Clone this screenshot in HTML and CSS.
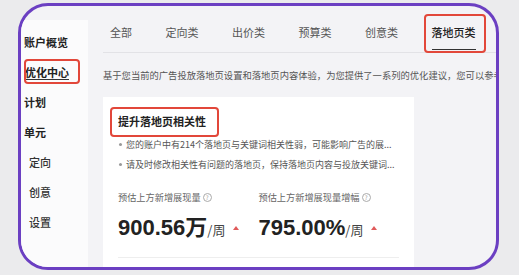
FILE: index.html
```html
<!DOCTYPE html>
<html lang="zh-CN">
<head>
    <meta charset="UTF-8">
    <meta name="viewport" content="width=device-width, initial-scale=1.0">
    <title>优化中心</title>
    <link rel="stylesheet" href="styles.css">
</head>
<body>
    <div class="frame">
        <div class="sidebar">
            <div class="nav-item">账户概览</div>
            <div class="nav-item current marked"><span>优化中心</span></div>
            <div class="nav-item">计划</div>
            <div class="nav-item">单元</div>
            <div class="nav-item sub">定向</div>
            <div class="nav-item sub">创意</div>
            <div class="nav-item sub">设置</div>
        </div>
        <div class="main">
            <div class="tabs">
                <div class="tab">全部</div>
                <div class="tab">定向类</div>
                <div class="tab">出价类</div>
                <div class="tab">预算类</div>
                <div class="tab">创意类</div>
                <div class="tab active marked">落地页类</div>
            </div>
            <p class="desc">基于您当前的广告投放落地页设置和落地页内容体验，为您提供了一系列的优化建议，您可以参考</p>
            <div class="card">
                <h2 class="card-title marked">提升落地页相关性</h2>
                <ul class="points">
                    <li>您的账户中有214个落地页与关键词相关性弱，可能影响广告的展...</li>
                    <li>请及时修改相关性有问题的落地页，保持落地页内容与投放关键词...</li>
                </ul>
                <div class="metrics">
                    <div class="metric">
                        <div class="label">预估上方新增展现量 <span class="info">?</span></div>
                        <div class="value"><b>900.56万</b><small>/周</small><i class="up"></i></div>
                    </div>
                    <div class="metric">
                        <div class="label">预估上方新增展现量增幅 <span class="info">?</span></div>
                        <div class="value"><b>795.00%</b><small>/周</small><i class="up"></i></div>
                    </div>
                </div>
                <div class="divider"></div>
            </div>
        </div>
    </div>
</body>
</html>
```

FILE: styles.css
```css
body {
    margin: 0;
    padding: 3px 0 0 18px;
    background: #ebebed;
    font-family: "Noto Sans CJK SC", "Noto Sans", sans-serif;
    color: #222;
}

.frame {
    box-sizing: border-box;
    width: 481px;
    height: 267px;
    border: 3px solid #6b3fc2;
    border-radius: 30px;
    background: #f3f3f6;
    display: flex;
    overflow: hidden;
}

.sidebar {
    width: 67px;
    flex-shrink: 0;
    margin-top: 14px;
    padding-top: 7px;
    background: #fbfbfc;
}

.nav-item {
    position: relative;
    height: 30px;
    line-height: 30px;
    padding-left: 3px;
    font-size: 11px;
    font-weight: 700;
    color: #222;
}

.nav-item.current span {
    padding-left: 1px;
    border-bottom: 1px solid #333;
    line-height: 14px;
    display: inline-block;
}

.nav-item.sub {
    padding-left: 8px;
    font-weight: 500;
    color: #333;
}

.marked::after {
    content: "";
    position: absolute;
    border: 2px solid #e2473a;
    border-radius: 4px;
}

.nav-item.marked::after {
    left: 3px;
    top: 2px;
    width: 52px;
    height: 21px;
}

.main {
    flex: 1;
    padding-left: 15px;
    overflow: hidden;
}

.tabs {
    display: flex;
    gap: 33.5px;
    height: 46px;
    padding-left: 7px;
    border-bottom: 1px solid #e2e2e6;
}

.tab {
    position: relative;
    padding-top: 19px;
    line-height: 14px;
    font-size: 11px;
    color: #555;
}

.tab.active {
    color: #222;
    font-weight: 500;
    box-shadow: inset 0 -3px 0 -1px #f3f3f6, inset 0 -3px 0 #333;
}

.tab.marked::after {
    left: -8px;
    top: 8px;
    width: 58px;
    height: 35px;
}

.desc {
    margin: 15px 0 0;
    line-height: 14px;
    font-size: 9.3px;
    color: #555;
    white-space: nowrap;
}

.card {
    width: 311px;
    height: 200px;
    margin-top: 15px;
    padding: 16px 15px 0;
    box-sizing: border-box;
    background: #fff;
}

.card-title {
    position: relative;
    margin: 0;
    line-height: 16px;
    font-size: 11px;
    font-weight: 700;
    color: #222;
}

.card-title.marked::after {
    left: -8px;
    top: -6px;
    width: 105px;
    height: 26px;
}

.points {
    list-style: none;
    margin: 6px 0 0;
    padding: 0;
}

.points li {
    line-height: 20px;
    font-size: 9px;
    color: #555;
    white-space: nowrap;
}

.points li::before {
    content: "";
    display: inline-block;
    width: 3px;
    height: 3px;
    margin: 0 4px 2px 1px;
    border-radius: 50%;
    background: #999;
}

.metrics {
    display: flex;
    margin-top: 15px;
}

.metric {
    width: 141px;
}

.label {
    display: flex;
    align-items: center;
    gap: 2px;
    line-height: 14px;
    font-size: 9.2px;
    color: #666;
    white-space: nowrap;
}

.info {
    width: 7px;
    height: 7px;
    border: 1px solid #aaa;
    border-radius: 50%;
    font-size: 6px;
    line-height: 7px;
    text-align: center;
    color: #999;
}

.value {
    display: flex;
    align-items: baseline;
    margin-top: 9px;
    height: 30px;
    line-height: 30px;
    white-space: nowrap;
}

.value b {
    font-family: "Liberation Sans", "Noto Sans CJK SC", sans-serif;
    font-size: 22px;
    font-weight: 700;
    color: #222;
}

.value small {
    font-size: 13px;
    color: #444;
}

.up {
    align-self: center;
    width: 0;
    height: 0;
    margin-left: 8px;
    border-left: 3px solid transparent;
    border-right: 3px solid transparent;
    border-bottom: 4px solid #e05a5a;
}

.divider {
    margin-top: 14px;
    border-top: 1px solid #eee;
}
```
